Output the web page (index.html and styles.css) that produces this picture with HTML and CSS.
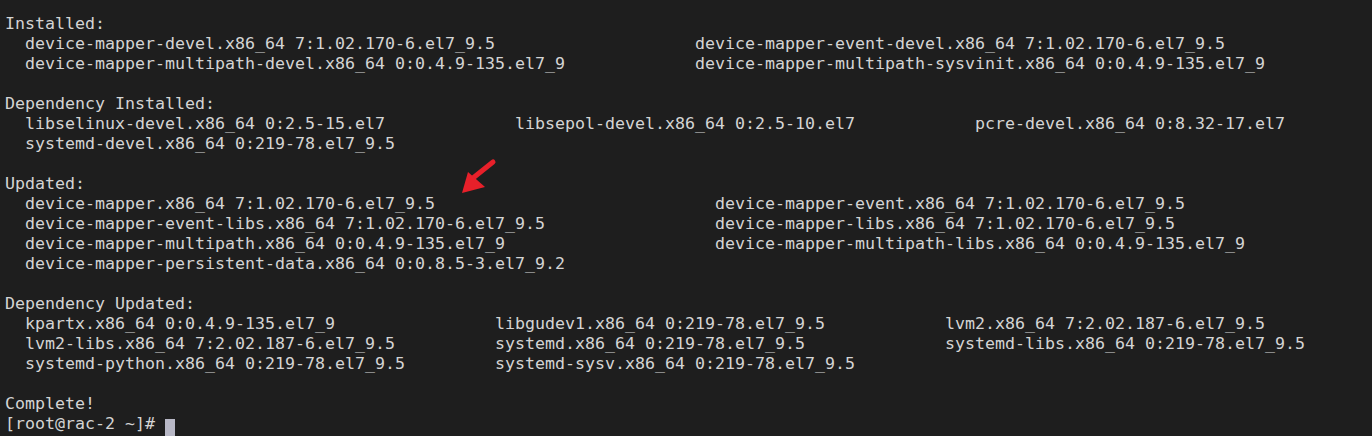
FILE: index.html
```html
<!DOCTYPE html>
<html>
<head>
<meta charset="utf-8">
<link rel="stylesheet" href="styles.css">
</head>
<body>
<main class="term">
<pre class="out">Installed:
  device-mapper-devel.x86_64 7:1.02.170-6.el7_9.5                    device-mapper-event-devel.x86_64 7:1.02.170-6.el7_9.5
  device-mapper-multipath-devel.x86_64 0:0.4.9-135.el7_9             device-mapper-multipath-sysvinit.x86_64 0:0.4.9-135.el7_9

Dependency Installed:
  libselinux-devel.x86_64 0:2.5-15.el7             libsepol-devel.x86_64 0:2.5-10.el7            pcre-devel.x86_64 0:8.32-17.el7
  systemd-devel.x86_64 0:219-78.el7_9.5

Updated:
  device-mapper.x86_64 7:1.02.170-6.el7_9.5                            device-mapper-event.x86_64 7:1.02.170-6.el7_9.5
  device-mapper-event-libs.x86_64 7:1.02.170-6.el7_9.5                 device-mapper-libs.x86_64 7:1.02.170-6.el7_9.5
  device-mapper-multipath.x86_64 0:0.4.9-135.el7_9                     device-mapper-multipath-libs.x86_64 0:0.4.9-135.el7_9
  device-mapper-persistent-data.x86_64 0:0.8.5-3.el7_9.2

Dependency Updated:
  kpartx.x86_64 0:0.4.9-135.el7_9                libgudev1.x86_64 0:219-78.el7_9.5            lvm2.x86_64 7:2.02.187-6.el7_9.5
  lvm2-libs.x86_64 7:2.02.187-6.el7_9.5          systemd.x86_64 0:219-78.el7_9.5              systemd-libs.x86_64 0:219-78.el7_9.5
  systemd-python.x86_64 0:219-78.el7_9.5         systemd-sysv.x86_64 0:219-78.el7_9.5

Complete!
[root@rac-2 ~]# <span class="cursor"> </span></pre>
<svg class="arrow" width="50" height="50" viewBox="0 0 50 50" aria-hidden="true">
  <line x1="42" y1="6" x2="22" y2="22" stroke="#e8202a" stroke-width="5" stroke-linecap="round"/>
  <polygon points="11,37 17,16 34,31" fill="#e8202a"/>
</svg>
</main>
</body>
</html>
```
FILE: styles.css
```css
html, body {
  margin: 0;
  padding: 0;
  background: #1e1e1e;
}
.term {
  position: relative;
  width: 1372px;
  height: 436px;
  overflow: hidden;
  background: #1e1e1e;
}
.out {
  margin: 0;
  padding: 14px 0 0 5px;
  font-family: "DejaVu Sans Mono", "Liberation Mono", monospace;
  font-size: 16.63px;
  line-height: 20px;
  color: #d4d4d4;
  white-space: pre;
}
.cursor {
  display: inline-block;
  width: 10px;
  height: 21px;
  background: #b8b8c6;
  vertical-align: -5px;
}
.arrow {
  position: absolute;
  left: 451px;
  top: 156px;
}
```
